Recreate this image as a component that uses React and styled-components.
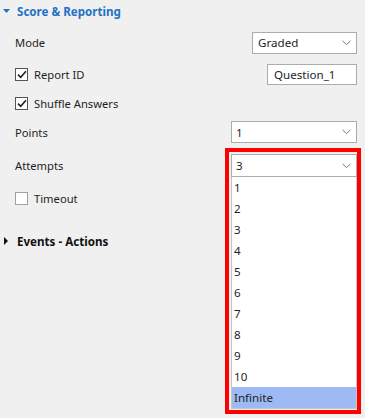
import React from "react";
import styled, { createGlobalStyle } from "styled-components";

const GlobalStyle = createGlobalStyle`
  html, body {
    margin: 0;
    padding: 0;
    background: #f0f0f0;
  }
  body {
    font-family: "Noto Sans", "Open Sans", sans-serif;
    font-size: 11.2px;
    color: #1e1e1e;
  }
`;

const Panel = styled.div`
  width: 365px;
  height: 418px;
  box-sizing: border-box;
  padding: 0 8px 0 0;
  overflow: hidden;
`;

const SectionHead = styled.div`
  display: flex;
  align-items: center;
  height: ${(p) => p.h || 22}px;
  padding-left: 3px;
  gap: 7px;
  font-weight: 700;
  font-size: 11.6px;
  color: ${(p) => (p.open ? "#1f72c4" : "#111")};
`;

const Fields = styled.div`
  display: flex;
  flex-direction: column;
  padding-left: 15px;
`;

const Row = styled.div`
  display: flex;
  align-items: center;
  justify-content: space-between;
  height: ${(p) => p.h}px;
`;

const Label = styled.span`
  display: flex;
  align-items: center;
  gap: 6px;
`;

const Box = styled.span`
  width: 11px;
  height: 11px;
  border: 1px solid ${(p) => (p.checked ? "#555" : "#a0a0a0")};
  background: #fff;
  display: flex;
  align-items: center;
  justify-content: center;
`;

const Select = styled.div`
  width: ${(p) => p.w}px;
  height: ${(p) => p.h || 22}px;
  box-sizing: border-box;
  border: 1px solid #acacac;
  background: #fff;
  display: flex;
  align-items: center;
  justify-content: space-between;
  padding: 0 5px 0 ${(p) => p.pl || 4}px;
  font-size: 11.6px;
`;

const Slot = styled.div`
  position: relative;
  width: 126px;
  height: 23px;
`;

const Highlight = styled.div`
  position: absolute;
  top: -6px;
  left: -6px;
  width: 136px;
  box-sizing: border-box;
  border: 4px solid #ff0000;
  padding: 2px 0 1px 2px;
  display: flex;
  flex-direction: column;
`;

const List = styled.div`
  border: 1px solid #c6c6c6;
  border-top: none;
  background: #fff;
  display: flex;
  flex-direction: column;
  font-size: 11.6px;
`;

const Option = styled.div`
  height: 21px;
  display: flex;
  align-items: center;
  padding-left: 2px;
  background: ${(p) => (p.active ? "#9dbaf4" : "transparent")};
`;

const Chevron = () => (
  <svg width="9" height="6" viewBox="0 0 9 6">
    <path d="M0.5 0.8 L4.5 4.6 L8.5 0.8" fill="none" stroke="#777" strokeWidth="1" />
  </svg>
);

const Check = ({ checked }) => (
  <Box checked={checked}>
    {checked && (
      <svg width="10" height="9" viewBox="0 0 10 9">
        <path d="M1 4.6 L3.7 7.3 L9 1.2" fill="none" stroke="#222" strokeWidth="1.6" />
      </svg>
    )}
  </Box>
);

const Caret = ({ open }) => (
  <svg width="7" height="8" viewBox="0 0 7 8">
    {open ? (
      <path d="M0 2 L7 2 L3.5 6 Z" fill="#1f72c4" />
    ) : (
      <path d="M1 0 L5 4 L1 8 Z" fill="#111" />
    )}
  </svg>
);

const attempts = ["1", "2", "3", "4", "5", "6", "7", "8", "9", "10", "Infinite"];

export default function App() {
  return (
    <Panel>
      <GlobalStyle />
      <SectionHead open h={22}>
        <Caret open />
        Score &amp; Reporting
      </SectionHead>
      <Fields>
        <Row h={41}>
          <Label>Mode</Label>
          <Select w={105} h={22} pl={5}>
            Graded
            <Chevron />
          </Select>
        </Row>
        <Row h={22}>
          <Label>
            <Check checked />
            Report ID
          </Label>
          <Select w={90} h={21} pl={6}>
            Question_1
          </Select>
        </Row>
        <Row h={36}>
          <Label>
            <Check checked />
            Shuffle Answers
          </Label>
        </Row>
        <Row h={22}>
          <Label>Points</Label>
          <Select w={126} h={22}>
            1
            <Chevron />
          </Select>
        </Row>
        <Row h={45}>
          <Label>Attempts</Label>
          <Slot>
            <Highlight>
              <Select w={126} h={23}>
                3
                <Chevron />
              </Select>
              <List>
                {attempts.map((a) => (
                  <Option key={a} active={a === "Infinite"}>
                    {a}
                  </Option>
                ))}
              </List>
            </Highlight>
          </Slot>
        </Row>
        <Row h={20}>
          <Label>
            <Check />
            Timeout
          </Label>
        </Row>
      </Fields>
      <SectionHead h={66}>
        <Caret />
        Events - Actions
      </SectionHead>
    </Panel>
  );
}
